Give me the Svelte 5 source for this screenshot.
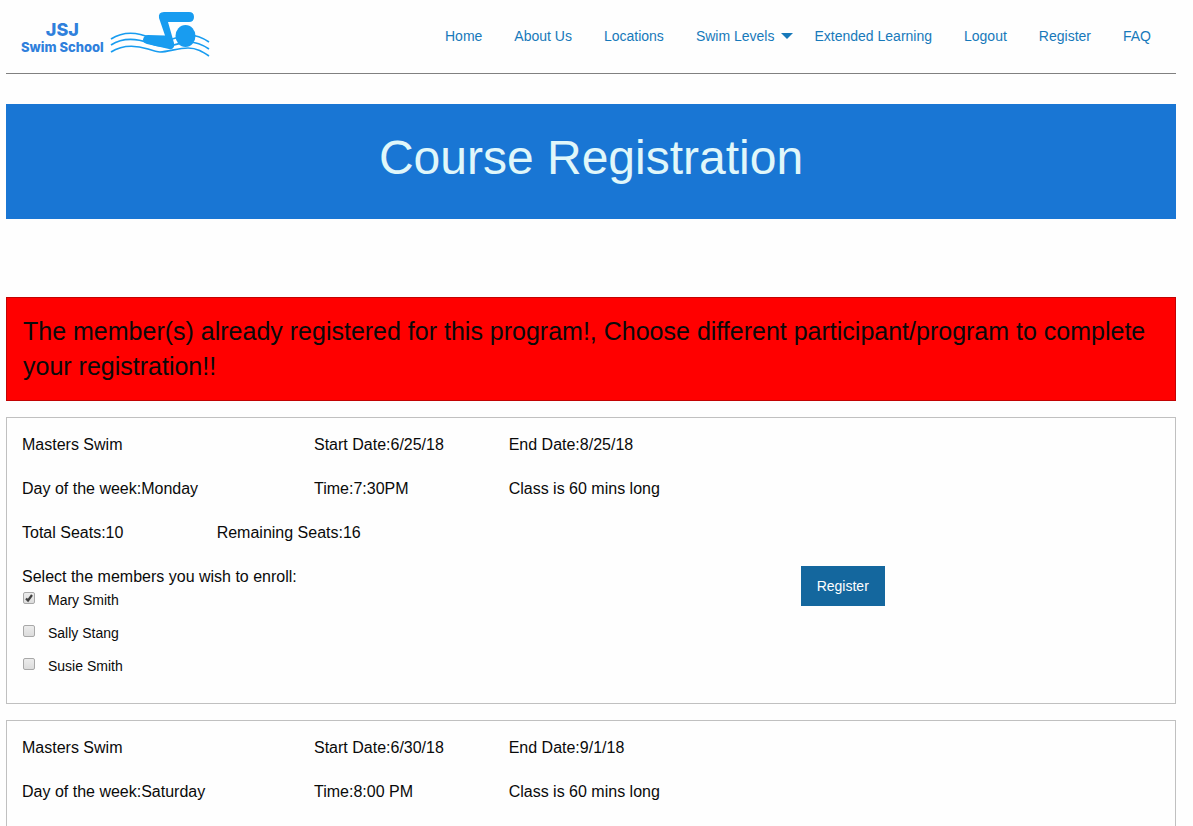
<script>
  const links = [
    { text: 'Home' },
    { text: 'About Us' },
    { text: 'Locations' },
    { text: 'Swim Levels', menu: true },
    { text: 'Extended Learning' },
    { text: 'Logout' },
    { text: 'Register' },
    { text: 'FAQ' }
  ];

  const courses = [
    {
      name: 'Masters Swim',
      start: '6/25/18',
      end: '8/25/18',
      day: 'Monday',
      time: '7:30PM',
      length: 60,
      seats: { total: 10, remaining: 16 },
      members: [
        { id: 'mary', name: 'Mary Smith', checked: true },
        { id: 'sally', name: 'Sally Stang', checked: false },
        { id: 'susie', name: 'Susie Smith', checked: false }
      ]
    },
    {
      name: 'Masters Swim',
      start: '6/30/18',
      end: '9/1/18',
      day: 'Saturday',
      time: '8:00 PM',
      length: 60
    }
  ];
</script>

<div class="page">
  <header class="top-bar">
    <a class="logo" href="#home">
      <span class="logo-text">
        <span class="logo-name">JSJ</span>
        <span class="logo-sub">Swim School</span>
      </span>
      <svg class="swimmer" viewBox="0 0 100 46" width="100" height="46" aria-hidden="true">
        <g fill="none" stroke="#189cf0" stroke-width="1.7">
          <path d="M1 28 C12 21 25 20 41 27 C58 34 68 24 79 24 C87 24 93 27 99 31" />
          <path d="M1 34 C12 27 25 27 39 32 C57 40 68 31 79 31 C87 31 93 34 99 38" />
          <path d="M1 41 C12 34 25 34 38 38 C44 40 47 41 50 41 C58 41 68 37 78 37 C87 37 93 41 99 45" />
        </g>
        <g fill="#189cf0">
          <path d="M54 1 H79 Q84 1 84 6 Q84 11 79 11 H58 L64 32 Q65 39 59 38 L37 33 Q33 32 33 28.500 Q34 24 38 24 L55 24.500 L49 7 Q48 1 54 1 Z" />
          <ellipse cx="75.500" cy="25" rx="10" ry="11" />
        </g>
      </svg>
    </a>
    <nav>
      <ul>
        {#each links as link}
          <li><a href="#top" class:has-menu={link.menu}>{link.text}</a></li>
        {/each}
      </ul>
    </nav>
  </header>

  <main>
    <div class="banner"><h1>Course Registration</h1></div>

    <div class="callout alert" role="alert">
      <p>The member(s) already registered for this program!, Choose different participant/program to complete your registration!!</p>
    </div>

    {#each courses as course}
      <form class="callout course">
        <div class="row">
          <div class="wide">{course.name}</div>
          <div>Start Date:{course.start}</div>
          <div>End Date:{course.end}</div>
        </div>
        <div class="row">
          <div class="wide">Day of the week:{course.day}</div>
          <div>Time:{course.time}</div>
          <div>Class is {course.length} mins long</div>
        </div>
        {#if course.seats}
          <div class="row">
            <div>Total Seats:{course.seats.total}</div>
            <div>Remaining Seats:{course.seats.remaining}</div>
          </div>
        {/if}
        {#if course.members}
          <div class="row">
            <fieldset>
              <legend>Select the members you wish to enroll:</legend>
              {#each course.members as member}
                <div class="member">
                  <input type="checkbox" id={member.id} checked={member.checked} />
                  <label for={member.id}>{member.name}</label>
                </div>
              {/each}
            </fieldset>
            <div class="action"><button type="button">Register</button></div>
          </div>
        {/if}
      </form>
    {/each}
  </main>
</div>

<style>
  :global(body) {
    background: #fefefe;
    color: #0a0a0a;
    font: 16px/24px "Liberation Sans", Arial, sans-serif;
  }

  .page {
    padding: 0 17px 0 6px;
  }

  .top-bar {
    display: flex;
    align-items: center;
    justify-content: space-between;
    box-sizing: border-box;
    height: 74px;
    padding: 0 9px 2px 15px;
    border-bottom: 1px solid #808080;
  }

  .logo {
    display: flex;
    align-items: center;
    gap: 6px;
    padding-bottom: 4px;
    color: #2f80dc;
    text-decoration: none;
  }

  .logo-text {
    display: flex;
    flex-direction: column;
    align-items: center;
    padding-top: 7px;
    font-family: Inter, sans-serif;
    font-weight: 800;
  }

  .logo-name {
    font-size: 18px;
    line-height: 20px;
  }

  .logo-sub {
    font-size: 13px;
    line-height: 15px;
  }

  .swimmer {
    display: block;
  }

  ul {
    display: flex;
    margin: 0;
    padding: 0;
    list-style: none;
  }

  nav a {
    display: flex;
    align-items: center;
    padding: 8px 16px;
    color: #1779ba;
    font-size: 14px;
    line-height: 16px;
    text-decoration: none;
  }

  nav .has-menu {
    gap: 7px;
    padding-right: 5px;
  }

  .has-menu::after {
    content: '';
    border: 6px solid transparent;
    border-top-color: #1779ba;
    border-bottom-width: 0;
  }

  .banner {
    margin: 30px 0 78px;
    padding: 20px 16px 28px;
    background: #1976d4;
    color: #e0f7fa;
    text-align: center;
  }

  h1 {
    margin: 0;
    font-size: 48px;
    font-weight: 400;
    line-height: 67px;
  }

  .callout {
    margin-bottom: 16px;
    border: 1px solid #c0c0c0;
  }

  .alert {
    padding: 16px;
    border-color: #c20303;
    background: #ff0000;
  }

  .alert p {
    margin: 0;
    font-size: 25px;
    line-height: 35px;
  }

  .course {
    padding: 15px 0 4px;
  }

  .row {
    display: grid;
    grid-template-columns: repeat(12, 1fr);
    margin-bottom: 20px;
  }

  .row > div {
    grid-column: span 2;
    padding-left: 15px;
    white-space: nowrap;
  }

  .row > .wide {
    grid-column: span 3;
  }

  .row > .action {
    grid-column: 9 / span 4;
    padding-top: 1px;
  }

  fieldset {
    grid-column: span 8;
    min-width: 0;
    margin: 0;
    padding: 0 0 0 15px;
    border: 0;
  }

  legend {
    padding: 0;
    line-height: 23px;
  }

  .member {
    display: flex;
    align-items: flex-start;
    gap: 13px;
    font-size: 14px;
    line-height: 25px;
  }

  .member + .member {
    margin-top: 8px;
  }

  input {
    flex: none;
    appearance: none;
    box-sizing: border-box;
    width: 12px;
    height: 12px;
    margin: 4px 0 0 1px;
    border: 1px solid #a8a8a8;
    border-radius: 2px;
    background: linear-gradient(#ececec, #dcdcdc);
  }

  input:checked {
    background: url("data:image/svg+xml,%3Csvg xmlns='http://www.w3.org/2000/svg' viewBox='0 0 10 10'%3E%3Cpath d='M2 5.500 L4 7.500 L8 2' fill='none' stroke='%23404040' stroke-width='2.200'/%3E%3C/svg%3E"), linear-gradient(#ececec, #dcdcdc);
  }

  button {
    display: block;
    padding: 12px 16px;
    border: 0;
    background: #14679e;
    color: #fefefe;
    font: 14px/16px "Liberation Sans", Arial, sans-serif;
  }
</style>
